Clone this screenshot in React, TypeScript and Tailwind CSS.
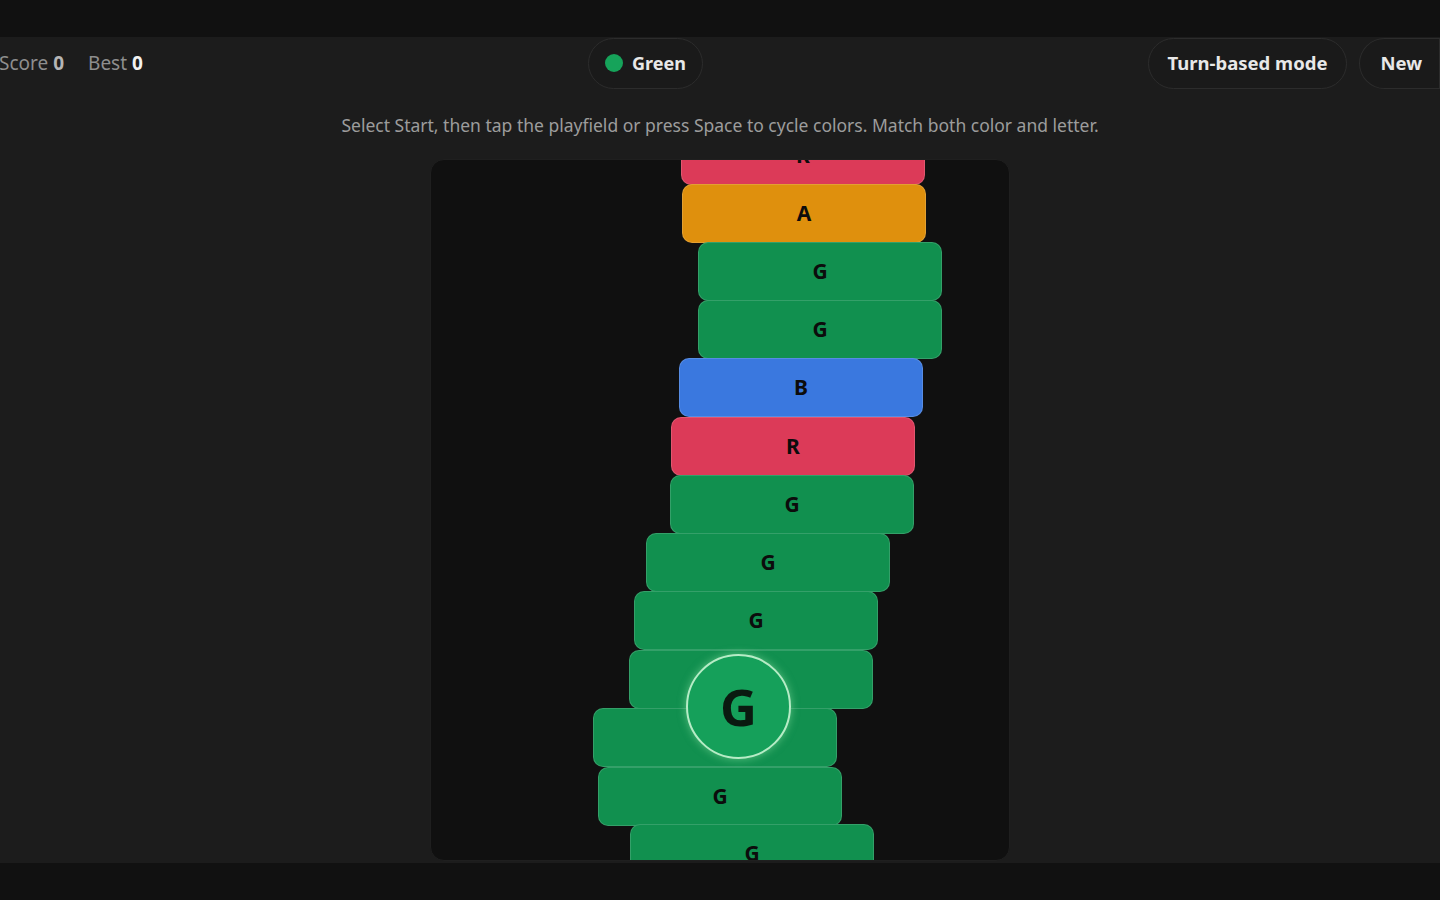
import React from "react";

type Block = { left: number; top: number; color: string; letter: string };

const C = {
  g: "bg-[#11904f]",
  o: "bg-[#df900d]",
  b: "bg-[#3a78df]",
  r: "bg-[#dc3a58]",
};

const blocks: Block[] = [
  { left: 250, top: -34, color: C.r, letter: "R" },
  { left: 251, top: 24, color: C.o, letter: "A" },
  { left: 267, top: 82, color: C.g, letter: "G" },
  { left: 267, top: 140, color: C.g, letter: "G" },
  { left: 248, top: 198, color: C.b, letter: "B" },
  { left: 240, top: 257, color: C.r, letter: "R" },
  { left: 239, top: 315, color: C.g, letter: "G" },
  { left: 215, top: 373, color: C.g, letter: "G" },
  { left: 203, top: 431, color: C.g, letter: "G" },
  { left: 198, top: 490, color: C.g, letter: "" },
  { left: 162, top: 548, color: C.g, letter: "" },
  { left: 167, top: 607, color: C.g, letter: "G" },
  { left: 199, top: 664, color: C.g, letter: "G" },
];

export default function App() {
  return (
    <div
      className="flex h-screen w-full flex-col overflow-hidden bg-[#1c1c1c]"
      style={{ fontFamily: '"Noto Sans", "Open Sans", sans-serif' }}
    >
      <div className="h-[37px] shrink-0 bg-[#111111]" />
      <div className="flex min-h-0 flex-1 flex-col">
        <header className="flex h-[52px] shrink-0 items-center">
          <div className="-ml-[1px] flex w-[589px] shrink-0 items-center gap-[24px] text-[19px] text-[#8e8e8e]">
            <span>
              Score <span className="font-bold text-[#b5b5b5]">0</span>
            </span>
            <span>
              Best <span className="font-bold text-[#f2f2f2]">0</span>
            </span>
          </div>
          <div className="flex h-[51px] items-center gap-[9px] rounded-full border border-[#2c2c2c] bg-[#1a1a1a] pl-[16px] pr-[16px]">
            <span className="h-[18px] w-[18px] rounded-full bg-[#16a35a]" />
            <span className="text-[18px] font-bold text-[#e8e8e8]">Green</span>
          </div>
          <div className="flex-1" />
          <div className="flex items-center gap-[12px]">
            <button className="h-[51px] rounded-full border border-[#2c2c2c] bg-[#1a1a1a] px-[19px] text-[18.5px] font-bold text-[#e8e8e8]">
              Turn-based mode
            </button>
            <button className="h-[51px] rounded-l-full rounded-r-[22px] border border-[#2c2c2c] bg-[#1a1a1a] pl-[20px] pr-[17px] text-[18.5px] font-bold text-[#e8e8e8]">
              New
            </button>
          </div>
        </header>
        <p className="mt-[23px] text-center text-[17.5px] leading-[26px] text-[#9c9c9c]">
          Select Start, then tap the playfield or press Space to cycle colors. Match both color and letter.
        </p>
        <div className="mt-[21px] flex justify-center">
          <div className="relative h-[702px] w-[580px] overflow-hidden rounded-[14px] border border-[#1f1f1f] bg-[#101010]">
            {blocks.map((b, i) => (
              <div
                key={i}
                className={`absolute flex h-[59px] w-[244px] items-center justify-center rounded-[10px] border border-white/15 ${b.color}`}
                style={{ left: b.left, top: b.top }}
              >
                <span className="text-[21px] font-bold text-[#0c0c0c]">{b.letter}</span>
              </div>
            ))}
            <div
              className="absolute flex h-[105px] w-[105px] items-center justify-center rounded-full border-2 border-[#b6ecc6] bg-[#15a05a] shadow-[0_0_8px_rgba(160,240,180,0.5)]"
              style={{ left: 255, top: 494 }}
            >
              <span className="text-[51px] font-bold leading-none text-[#0a1a10]">G</span>
            </div>
          </div>
        </div>
      </div>
      <div className="h-[37px] shrink-0 bg-[#111111]" />
    </div>
  );
}
